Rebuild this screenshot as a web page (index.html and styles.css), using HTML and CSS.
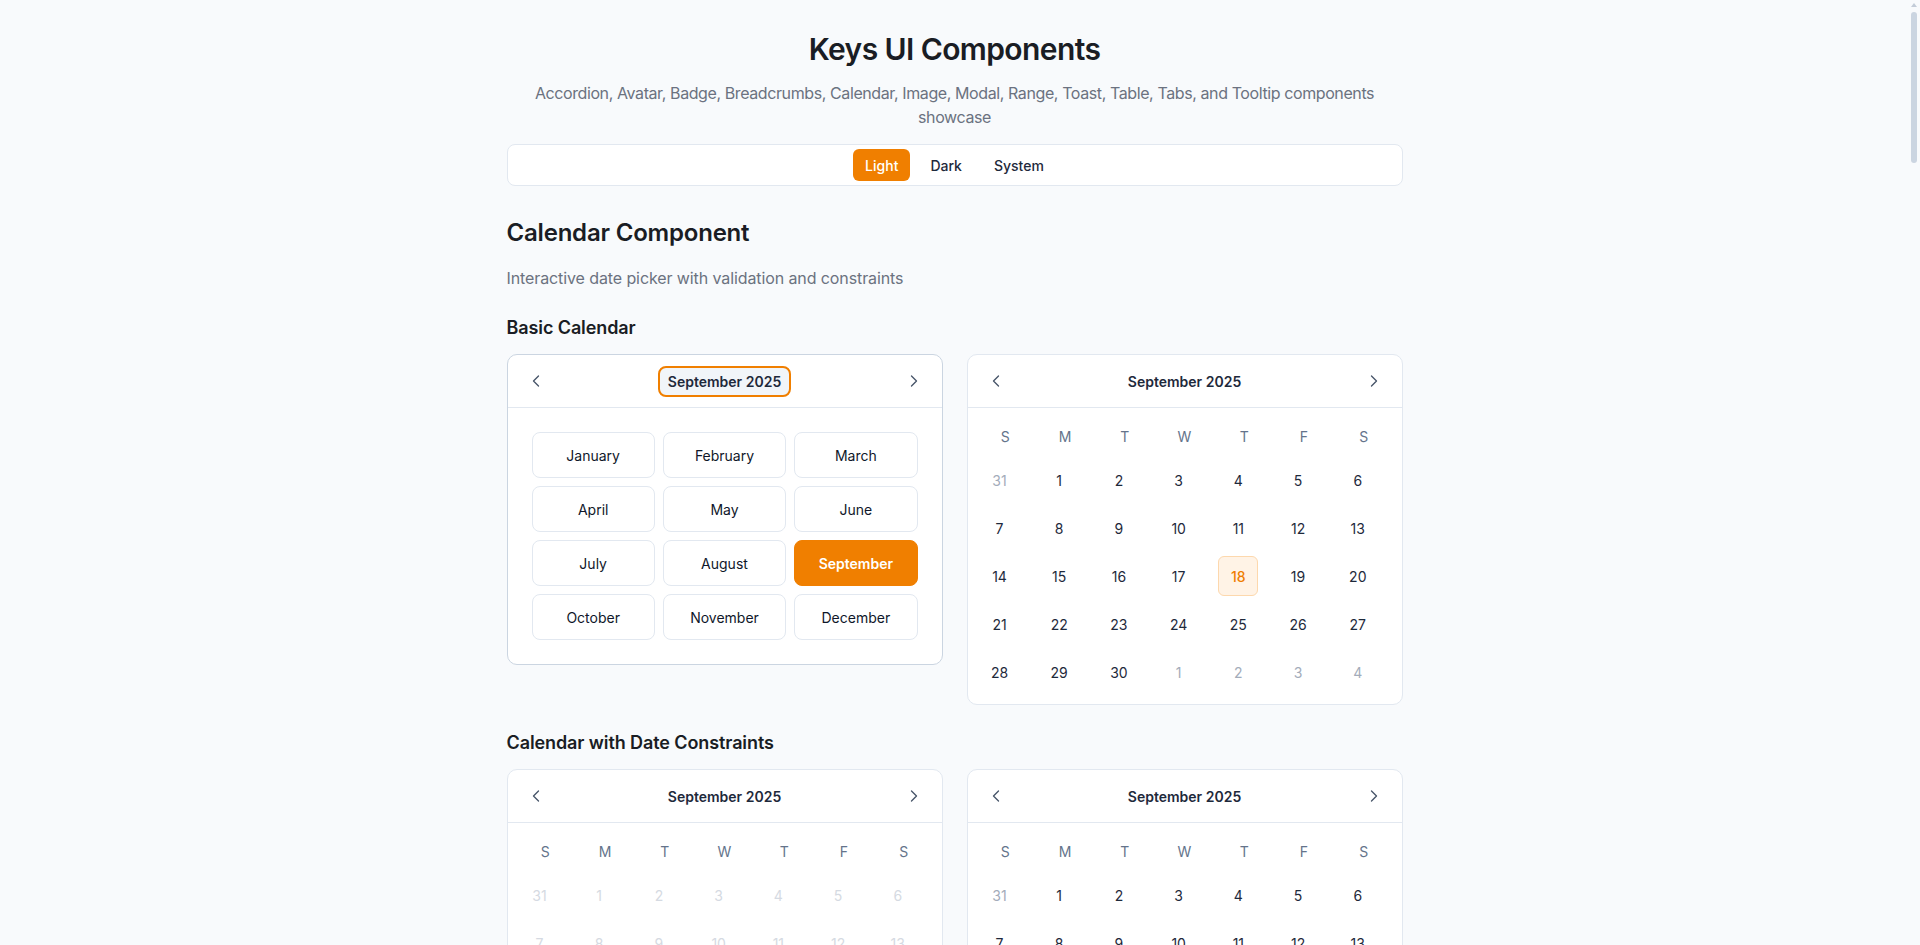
FILE: index.html
```html
<!DOCTYPE html>
<html lang="en">
<head>
<meta charset="utf-8">
<title>Keys UI Components</title>
<link rel="stylesheet" href="styles.css">
</head>
<body>
<div class="fake-scrollbar" aria-hidden="true">
  <span class="sb-arrow"></span>
  <span class="sb-thumb"></span>
</div>
<div class="page">
  <header class="hero">
    <h1 class="hero-title">Keys UI Components</h1>
    <p class="hero-sub">Accordion, Avatar, Badge, Breadcrumbs, Calendar, Image, Modal, Range, Toast, Table, Tabs, and Tooltip components showcase</p>
  </header>

  <nav class="theme-bar">
    <button class="theme-btn active">Light</button>
    <button class="theme-btn">Dark</button>
    <button class="theme-btn">System</button>
  </nav>

  <section class="section">
    <h2 class="section-title">Calendar Component</h2>
    <p class="section-desc">Interactive date picker with validation and constraints</p>

    <h3 class="sub-title">Basic Calendar</h3>
    <div class="cal-grid">
      <div class="cal focused">
        <div class="cal-head">
          <button class="nav-btn"><svg viewBox="0 0 24 24"><path d="m15 18-6-6 6-6"/></svg></button>
          <button class="cal-title-btn">September 2025</button>
          <button class="nav-btn"><svg viewBox="0 0 24 24"><path d="m9 18 6-6-6-6"/></svg></button>
        </div>
        <div class="months">
          <button class="month">January</button>
          <button class="month">February</button>
          <button class="month">March</button>
          <button class="month">April</button>
          <button class="month">May</button>
          <button class="month">June</button>
          <button class="month">July</button>
          <button class="month">August</button>
          <button class="month selected">September</button>
          <button class="month">October</button>
          <button class="month">November</button>
          <button class="month">December</button>
        </div>
      </div>

      <div class="cal">
        <div class="cal-head">
          <button class="nav-btn"><svg viewBox="0 0 24 24"><path d="m15 18-6-6 6-6"/></svg></button>
          <span class="cal-title">September 2025</span>
          <button class="nav-btn"><svg viewBox="0 0 24 24"><path d="m9 18 6-6-6-6"/></svg></button>
        </div>
        <div class="days-wrap">
          <div class="weekdays"><span>S</span><span>M</span><span>T</span><span>W</span><span>T</span><span>F</span><span>S</span></div>
          <div class="days">
            <span class="day out">31</span><span class="day">1</span><span class="day">2</span><span class="day">3</span><span class="day">4</span><span class="day">5</span><span class="day">6</span>
            <span class="day">7</span><span class="day">8</span><span class="day">9</span><span class="day">10</span><span class="day">11</span><span class="day">12</span><span class="day">13</span>
            <span class="day">14</span><span class="day">15</span><span class="day">16</span><span class="day">17</span><span class="day today">18</span><span class="day">19</span><span class="day">20</span>
            <span class="day">21</span><span class="day">22</span><span class="day">23</span><span class="day">24</span><span class="day">25</span><span class="day">26</span><span class="day">27</span>
            <span class="day">28</span><span class="day">29</span><span class="day">30</span><span class="day out">1</span><span class="day out">2</span><span class="day out">3</span><span class="day out">4</span>
          </div>
        </div>
      </div>
    </div>

    <h3 class="sub-title">Calendar with Date Constraints</h3>
    <div class="cal-grid">
      <div class="cal">
        <div class="cal-head">
          <button class="nav-btn"><svg viewBox="0 0 24 24"><path d="m15 18-6-6 6-6"/></svg></button>
          <span class="cal-title">September 2025</span>
          <button class="nav-btn"><svg viewBox="0 0 24 24"><path d="m9 18 6-6-6-6"/></svg></button>
        </div>
        <div class="days-wrap">
          <div class="weekdays"><span>S</span><span>M</span><span>T</span><span>W</span><span>T</span><span>F</span><span>S</span></div>
          <div class="days">
            <span class="day off">31</span><span class="day off">1</span><span class="day off">2</span><span class="day off">3</span><span class="day off">4</span><span class="day off">5</span><span class="day off">6</span>
            <span class="day off">7</span><span class="day off">8</span><span class="day off">9</span><span class="day off">10</span><span class="day off">11</span><span class="day off">12</span><span class="day off">13</span>
            <span class="day off">14</span><span class="day off">15</span><span class="day off">16</span><span class="day off">17</span><span class="day today">18</span><span class="day">19</span><span class="day">20</span>
            <span class="day">21</span><span class="day">22</span><span class="day">23</span><span class="day">24</span><span class="day">25</span><span class="day">26</span><span class="day">27</span>
            <span class="day">28</span><span class="day">29</span><span class="day">30</span><span class="day off">1</span><span class="day off">2</span><span class="day off">3</span><span class="day off">4</span>
          </div>
        </div>
      </div>

      <div class="cal">
        <div class="cal-head">
          <button class="nav-btn"><svg viewBox="0 0 24 24"><path d="m15 18-6-6 6-6"/></svg></button>
          <span class="cal-title">September 2025</span>
          <button class="nav-btn"><svg viewBox="0 0 24 24"><path d="m9 18 6-6-6-6"/></svg></button>
        </div>
        <div class="days-wrap">
          <div class="weekdays"><span>S</span><span>M</span><span>T</span><span>W</span><span>T</span><span>F</span><span>S</span></div>
          <div class="days">
            <span class="day out">31</span><span class="day">1</span><span class="day">2</span><span class="day">3</span><span class="day">4</span><span class="day">5</span><span class="day">6</span>
            <span class="day">7</span><span class="day">8</span><span class="day">9</span><span class="day">10</span><span class="day">11</span><span class="day">12</span><span class="day">13</span>
            <span class="day">14</span><span class="day">15</span><span class="day">16</span><span class="day">17</span><span class="day today">18</span><span class="day">19</span><span class="day">20</span>
            <span class="day">21</span><span class="day">22</span><span class="day">23</span><span class="day">24</span><span class="day">25</span><span class="day">26</span><span class="day">27</span>
            <span class="day">28</span><span class="day">29</span><span class="day">30</span><span class="day out">1</span><span class="day out">2</span><span class="day out">3</span><span class="day out">4</span>
          </div>
        </div>
      </div>
    </div>
  </section>
</div>
</body>
</html>
```

FILE: styles.css
```css
* { box-sizing: border-box; }
body {
  margin: 0;
  padding-right: 11px;
  background: #f8fafc;
  font-family: Inter, "Noto Sans", "Liberation Sans", sans-serif;
  color: #1e293b;
}
.fake-scrollbar {
  position: fixed;
  top: 0;
  right: 0;
  width: 11px;
  height: 100vh;
  background: #f8fafc;
}
.sb-arrow {
  position: absolute;
  top: 3px;
  left: 2px;
  width: 0;
  height: 0;
  border-left: 3.5px solid transparent;
  border-right: 3.5px solid transparent;
  border-bottom: 4px solid #c3ccd8;
}
.sb-thumb {
  position: absolute;
  top: 12px;
  left: 2px;
  width: 6px;
  height: 151px;
  border-radius: 3px;
  background: #cbd5e1;
}
button {
  font-family: inherit;
  cursor: pointer;
}
.page {
  max-width: 896px;
  margin: 0 auto;
  padding: 31px 0 80px;
}
.hero { text-align: center; }
.hero-title {
  margin: 0;
  font-size: 30px;
  line-height: 36px;
  font-weight: 600;
  color: #1a1d24;
  letter-spacing: -0.6px;
}
.hero-sub {
  margin: 14px 0 0;
  font-size: 16px;
  line-height: 24px;
  color: #6b7280;
  letter-spacing: -0.4px;
}
.theme-bar {
  margin-top: 15px;
  display: flex;
  justify-content: center;
  gap: 8px;
  padding: 4px;
  background: #fff;
  border: 1px solid #e2e8f0;
  border-radius: 8px;
}
.theme-btn {
  height: 32px;
  padding: 0 12px;
  border: 0;
  border-radius: 6px;
  background: transparent;
  font-size: 14px;
  font-weight: 500;
  color: #1e293b;
}
.theme-btn.active {
  background: #f07f00;
  color: #fff;
}
.section-title {
  margin: 31px 0 0;
  font-size: 24px;
  line-height: 32px;
  font-weight: 600;
  color: #1a1d24;
  letter-spacing: -0.2px;
}
.section-desc {
  margin: 17px 0 0;
  font-size: 16px;
  line-height: 24px;
  color: #6b7280;
  letter-spacing: -0.1px;
}
.sub-title {
  margin: 24px 0 0;
  font-size: 18px;
  line-height: 28px;
  font-weight: 600;
  color: #1a1d24;
  letter-spacing: -0.1px;
}
.cal-grid {
  margin-top: 12px;
  display: grid;
  grid-template-columns: 1fr 1fr;
  gap: 24px;
  align-items: start;
}
.cal {
  background: #fff;
  border: 1px solid #e2e8f0;
  border-radius: 10px;
}
.cal.focused {
  border-color: #cbd5e1;
}
.cal-head {
  display: flex;
  align-items: center;
  justify-content: space-between;
  padding: 10px 12px;
  border-bottom: 1px solid #e2e8f0;
}
.nav-btn {
  width: 32px;
  height: 32px;
  display: flex;
  align-items: center;
  justify-content: center;
  border: 0;
  background: transparent;
  padding: 0;
  border-radius: 6px;
}
.nav-btn svg {
  width: 20px;
  height: 20px;
  fill: none;
  stroke: #475569;
  stroke-width: 1.6;
  stroke-linecap: round;
  stroke-linejoin: round;
}
.cal-title, .cal-title-btn {
  font-size: 14px;
  font-weight: 600;
  color: #1e293b;
}
.cal-title-btn {
  height: 31px;
  padding: 0 8px;
  background: #f1f5f9;
  border: 2px solid #f07f00;
  border-radius: 8px;
}
.months {
  padding: 24px;
  display: grid;
  grid-template-columns: repeat(3, 1fr);
  gap: 8px;
}
.month {
  height: 46px;
  background: #fff;
  border: 1px solid #e2e8f0;
  border-radius: 8px;
  font-size: 14px;
  font-weight: 400;
  color: #0f172a;
}
.month.selected {
  background: #f07f00;
  border-color: #f07f00;
  color: #fff;
  font-weight: 600;
}
.days-wrap {
  padding: 16px 8px 12px;
}
.weekdays {
  display: grid;
  grid-template-columns: repeat(7, 1fr);
  height: 24px;
  align-items: center;
  text-align: center;
  font-size: 14px;
  font-weight: 400;
  color: #64748b;
}
.days {
  margin-top: 12px;
  display: grid;
  grid-template-columns: repeat(7, 1fr);
  row-gap: 8px;
}
.day {
  width: 40px;
  height: 40px;
  margin-left: 4px;
  display: flex;
  align-items: center;
  justify-content: center;
  font-size: 14px;
  color: #1e293b;
  border: 1px solid transparent;
  border-radius: 6px;
}
.day.out { color: #a3acba; }
.day.off { color: #d5dae2; }
.day.today {
  background: #fff3e6;
  border-color: #fdd8ad;
  color: #ef7d00;
  font-weight: 500;
}
```
